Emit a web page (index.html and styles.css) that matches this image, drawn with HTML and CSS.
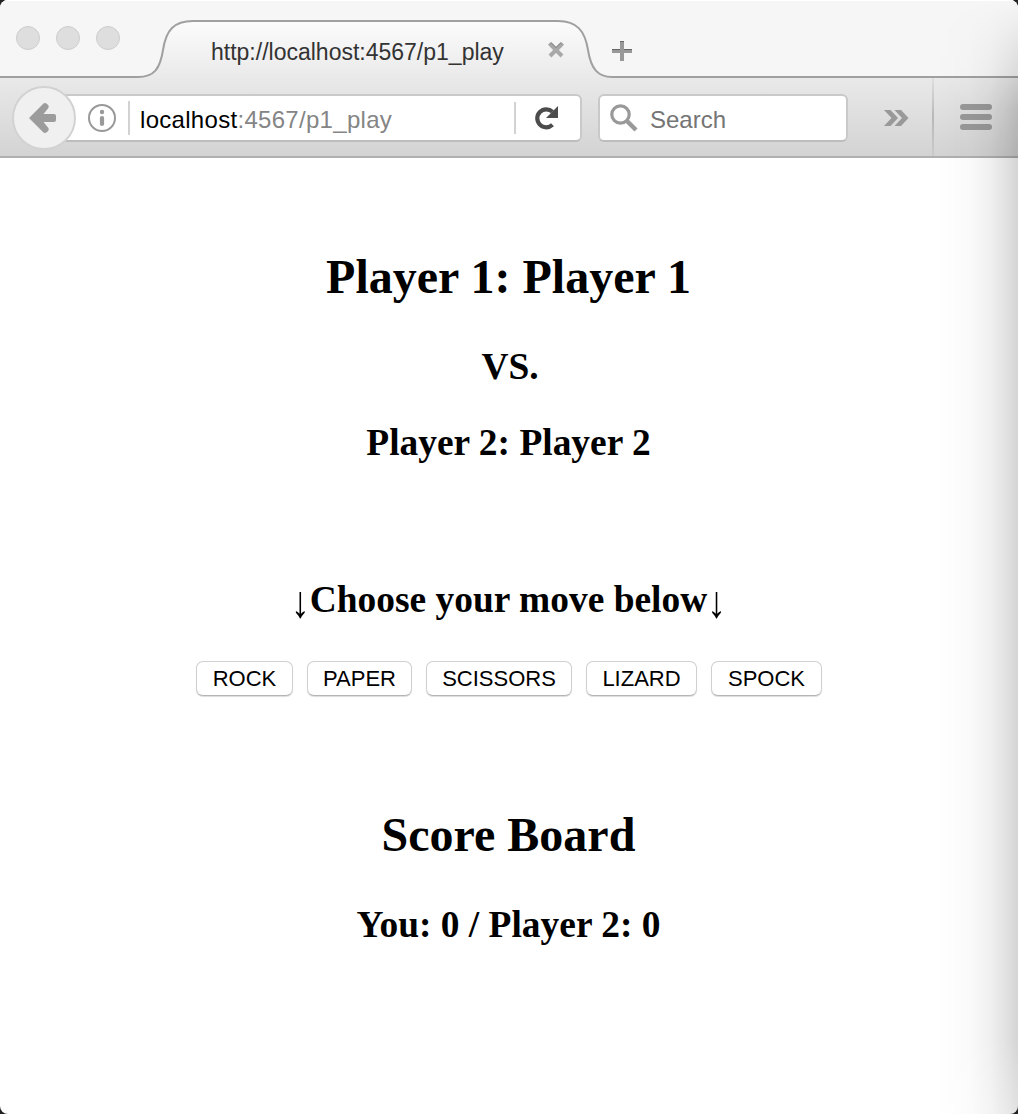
FILE: index.html
```html
<!DOCTYPE html>
<html lang="en">
<head>
<meta charset="utf-8">
<title>http://localhost:4567/p1_play</title>
<link rel="stylesheet" href="styles.css">
</head>
<body>
<div class="window">
  <header class="tabbar">
    <svg class="tab-shape" width="1018" height="80" viewBox="0 0 1018 80" aria-hidden="true">
      <defs>
        <linearGradient id="tabfill" x1="0" y1="20" x2="0" y2="80" gradientUnits="userSpaceOnUse">
          <stop offset="0" stop-color="#fcfcfc"/><stop offset="1" stop-color="#e9e9e9"/>
        </linearGradient>
      </defs>
      <path d="M0 77H138C154 77 160 69 163 50C166 30 174 21 193 21H558C577 21 585 31 588 50C591 69 598 77 612 77H1018V80H0Z" fill="url(#tabfill)"/>
      <path d="M0 77H138C154 77 160 69 163 50C166 30 174 21 193 21H558C577 21 585 31 588 50C591 69 598 77 612 77H1018" fill="none" stroke="#a0a0a0" stroke-width="2"/>
    </svg>
    <div class="lights"><span class="light"></span><span class="light"></span><span class="light"></span></div>
    <div class="tab">
      <span class="tab-title">http://localhost:4567/p1_play</span>
      <svg class="tab-close" width="16" height="16" viewBox="0 0 16 16"><path d="M2 2L14 14M14 2L2 14" stroke="#a8a8a8" stroke-width="4"/><path d="M.5 3L3 .5L8 5.5L13 .5L15.500 3" fill="none" stroke="#777"/></svg>
    </div>
    <svg class="new-tab" width="20" height="20" viewBox="0 0 20 20"><path d="M10 0V20M0 10H20" stroke="#989898" stroke-width="4"/><path d="M8 .5H12M0 8.500H8M12 8.500H20" stroke="#666"/></svg>
  </header>
  <div class="toolbar">
    <svg class="back" width="64" height="64" viewBox="0 0 64 64"><circle cx="32" cy="32" r="31" fill="#f0f0f0" stroke="#d2d2d2" stroke-width="2"/><path d="M17 32L31 18Q33 16 35 18L36.300 19.300Q37.500 21 36 22.500L31.500 28H42Q44 28 44 30V34Q44 36 42 36H31.500L36 41.500Q37.500 43 36.300 44.700L35 46Q33 48 31 46Z" fill="#9c9c9c"/></svg>
    <div class="urlbar">
      <svg class="info" width="28" height="28" viewBox="0 0 28 28"><circle cx="14" cy="14" r="13" fill="none" stroke="#999" stroke-width="2"/><circle cx="14" cy="8" r="2.200" fill="#999"/><path d="M14 14V20" stroke="#999" stroke-width="4.200" stroke-linecap="round"/></svg>
      <span class="divider"></span>
      <span class="url">localhost<span class="url-rest">:4567/p1_play</span></span>
      <span class="divider reload-divider"></span>
      <svg class="reload" width="24" height="24" viewBox="0 0 24 24"><path d="M17.500 18.800A9 9 0 1 1 17.500 5.800" fill="none" stroke="#4c4c4c" stroke-width="4.200"/><path d="M23 0V12H11Z" fill="#4c4c4c"/></svg>
    </div>
    <div class="search">
      <svg width="28" height="28" viewBox="0 0 28 28"><circle cx="10.500" cy="10.500" r="8.700" fill="none" stroke="#999" stroke-width="3.200"/><path d="M17 17L26 26" stroke="#999" stroke-width="4.400"/></svg>
      <span>Search</span>
    </div>
    <svg class="more" width="25" height="16" viewBox="0 0 25 16"><path d="M0 0H6.500L14 8L6.500 16H0L7.500 8Z M10.500 0H17L24.500 8L17 16H10.500L18 8Z" fill="#999"/></svg>
    <span class="menu-divider"></span>
    <div class="menu"><i></i><i></i><i></i></div>
  </div>
  <main class="page">
    <h2>Player 1: Player 1</h2>
    <h3 class="versus">VS.</h3>
    <h3 class="opponent">Player 2: Player 2</h3>
    <h3 class="prompt"><span class="arrow">↓</span>Choose your move below<span class="arrow">↓</span></h3>
    <div class="moves">
      <button class="rock">ROCK</button><button class="paper">PAPER</button><button class="scissors">SCISSORS</button><button class="lizard">LIZARD</button><button class="spock">SPOCK</button>
    </div>
    <h2 class="board">Score Board</h2>
    <h3 class="score">You: 0 / Player 2: 0</h3>
  </main>
  <div class="edge-shade"></div>
</div>
</body>
</html>
```
FILE: styles.css
```css
* { box-sizing: border-box; }
body { margin: 0; background: #222; }
svg { display: block; flex: none; }
.window {
  position: relative;
  width: 1018px;
  height: 1114px;
  overflow: hidden;
  border-radius: 8px;
  background: #fff;
  font-family: "Liberation Sans", Arial, sans-serif;
}
.tabbar {
  position: relative;
  display: flex;
  height: 78px;
  background: #f6f6f6;
  box-shadow: inset 0 1px #fff;
}
.tab-shape { position: absolute; left: 0; top: 0; }
.lights, .tab, .new-tab { position: relative; }
.lights { display: flex; gap: 16px; padding: 26px 0 0 16px; width: 163px; }
.light {
  width: 24px;
  height: 24px;
  border: 1px solid #cdcdcd;
  border-radius: 50%;
  background: #dedede;
}
.tab { display: flex; width: 425px; padding-left: 48px; }
.tab-title {
  width: 337px;
  margin-top: 39px;
  font-size: 23px;
  line-height: 26px;
  color: #333;
  white-space: nowrap;
}
.tab-close { margin-top: 42px; }
.new-tab { margin: 41px 0 0 24px; }
.toolbar {
  position: relative;
  display: flex;
  height: 80px;
  padding-left: 12px;
  border-bottom: 2px solid #b0b0b0;
  background: linear-gradient(#e9e9e9, #d3d3d3);
}
.back { position: relative; z-index: 1; margin-top: 8px; }
.urlbar, .search {
  display: flex;
  height: 48px;
  margin-top: 16px;
  border: 2px solid #c9c9c9;
  border-bottom-color: #bdbdbd;
  border-radius: 6px;
  background: #fff;
}
.urlbar { width: 526px; margin-left: -20px; padding-left: 30px; }
.info { margin-top: 8px; }
.divider { width: 2px; height: 34px; margin: 5px 0 0 12px; background: #d2d2d2; }
.url {
  width: 374px;
  margin: 10px 0 0 10px;
  font-size: 24px;
  line-height: 28px;
  letter-spacing: .3px;
  color: #000;
}
.url-rest { color: #858585; }
.reload-divider { height: 32px; margin: 6px 0 0; }
.reload { margin: 10px 0 0 19px; }
.search { width: 250px; margin-left: 16px; padding: 8px 0 0 10px; font-size: 24px; line-height: 32px; color: #757575; }
.search span { margin-left: 12px; }
.more { margin: 32px 0 0 36px; }
.menu-divider { width: 2px; height: 78px; margin-left: 23px; background: linear-gradient(#dedede, #b8b8b8 50%, #cacaca); }
.menu { display: flex; flex-direction: column; gap: 4px; margin: 26px 0 0 26px; }
.menu i { width: 32px; height: 6px; border-radius: 3px; background: #999; }

.page {
  padding-top: 91px;
  font-family: "Liberation Serif", "Times New Roman", serif;
  text-align: center;
}
h2, h3 { margin: 0 1px 0 0; color: #000; font-weight: bold; }
h2 { font-size: 48px; line-height: 56px; }
h3 { font-size: 37.44px; line-height: 44px; }
.versus { margin-top: 40px; padding-left: 3px; }
.opponent { margin-top: 32px; }
.prompt { margin-top: 113px; }
.arrow { display: inline-block; transform: scaleY(1.2); transform-origin: 50% 24%; }
.moves { display: flex; justify-content: center; gap: 14px; margin-top: 39px; }
button {
  height: 35px;
  padding: 0;
  border: 1px solid #d0d0d0;
  border-bottom-color: #b5b5b5;
  border-radius: 7px;
  background: #fff;
  box-shadow: 0 1px 1px #ddd;
  font: 22px/33px "Liberation Sans", Arial, sans-serif;
  color: #000;
}
.rock { width: 97px; }
.paper { width: 105px; }
.scissors { width: 146px; }
.lizard { width: 111px; }
.spock { width: 111px; }
.board { margin-top: 111px; }
.score { margin-top: 40px; }
.edge-shade {
  position: absolute;
  top: 0;
  right: 0;
  width: 80px;
  height: 1114px;
  background: linear-gradient(to right, transparent, rgba(0,0,0,.02) 40%, rgba(0,0,0,.06) 65%, rgba(0,0,0,.12) 87%, rgba(0,0,0,.17));
  -webkit-mask-image: linear-gradient(transparent, #000 110px, #000 1040px, rgba(0,0,0,.7));
  mask-image: linear-gradient(transparent, #000 110px, #000 1040px, rgba(0,0,0,.7));
}
```
